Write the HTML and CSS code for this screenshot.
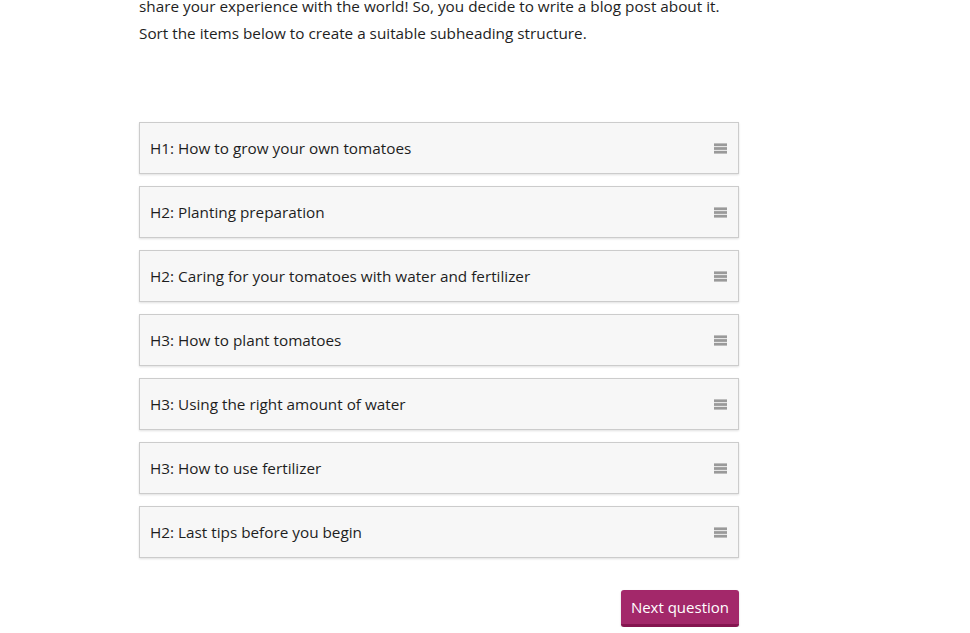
FILE: index.html
```html
<!DOCTYPE html>
<html lang="en">
<head>
<meta charset="utf-8">
<title>Sort subheadings</title>
<link rel="stylesheet" href="styles.css">
</head>
<body>
<main class="quiz">
  <p class="intro">share your experience with the world! So, you decide to write a blog post about it.<br>Sort the items below to create a suitable subheading structure.</p>
  <ul class="sort-list">
    <li class="sort-item"><span>H1: How to grow your own tomatoes</span><svg class="handle" viewBox="0 0 14 11"><rect y="0" width="14" height="3"/><rect y="4" width="14" height="3"/><rect y="8" width="14" height="3"/></svg></li>
    <li class="sort-item"><span>H2: Planting preparation</span><svg class="handle" viewBox="0 0 14 11"><rect y="0" width="14" height="3"/><rect y="4" width="14" height="3"/><rect y="8" width="14" height="3"/></svg></li>
    <li class="sort-item"><span>H2: Caring for your tomatoes with water and fertilizer</span><svg class="handle" viewBox="0 0 14 11"><rect y="0" width="14" height="3"/><rect y="4" width="14" height="3"/><rect y="8" width="14" height="3"/></svg></li>
    <li class="sort-item"><span>H3: How to plant tomatoes</span><svg class="handle" viewBox="0 0 14 11"><rect y="0" width="14" height="3"/><rect y="4" width="14" height="3"/><rect y="8" width="14" height="3"/></svg></li>
    <li class="sort-item"><span>H3: Using the right amount of water</span><svg class="handle" viewBox="0 0 14 11"><rect y="0" width="14" height="3"/><rect y="4" width="14" height="3"/><rect y="8" width="14" height="3"/></svg></li>
    <li class="sort-item"><span>H3: How to use fertilizer</span><svg class="handle" viewBox="0 0 14 11"><rect y="0" width="14" height="3"/><rect y="4" width="14" height="3"/><rect y="8" width="14" height="3"/></svg></li>
    <li class="sort-item"><span>H2: Last tips before you begin</span><svg class="handle" viewBox="0 0 14 11"><rect y="0" width="14" height="3"/><rect y="4" width="14" height="3"/><rect y="8" width="14" height="3"/></svg></li>
  </ul>
  <div class="actions">
    <button class="next-btn" type="button">Next question</button>
  </div>
</main>
</body>
</html>
```
FILE: styles.css
```css
html, body {
  margin: 0;
  padding: 0;
  background: #fff;
  overflow: hidden;
}
body {
  font-family: "Open Sans", "Noto Sans", "Liberation Sans", sans-serif;
  color: #1e1e1e;
  font-size: 15px;
}
.quiz {
  width: 600px;
  margin-left: 139px;
}
.intro {
  margin: -7px 0 0;
  width: 640px;
  line-height: 27px;
  font-size: 15.3px;
  letter-spacing: 0;
}
.sort-list {
  list-style: none;
  margin: 75px 0 0;
  padding: 0;
  display: flex;
  flex-direction: column;
  gap: 12px;
}
.sort-item {
  box-sizing: border-box;
  height: 52px;
  border: 1px solid #cccccc;
  background: #f7f7f7;
  box-shadow: 0 1px 2px rgba(0,0,0,0.12);
  display: flex;
  align-items: center;
  justify-content: space-between;
  padding: 0 11px 0 10px;
  font-size: 15.3px;
}
.handle {
  width: 13px;
  height: 11px;
  fill: #9a9a9a;
}
.actions {
  display: flex;
  justify-content: flex-end;
  margin-top: 32px;
}
.next-btn {
  font-family: inherit;
  font-size: 15px;
  color: #fff;
  background: #a3286a;
  border: none;
  border-bottom: 3px solid #85154f;
  border-radius: 3px;
  height: 37px;
  padding: 0 10px;
  box-shadow: 0 1px 2px rgba(0,0,0,0.2);
  cursor: pointer;
}
```
